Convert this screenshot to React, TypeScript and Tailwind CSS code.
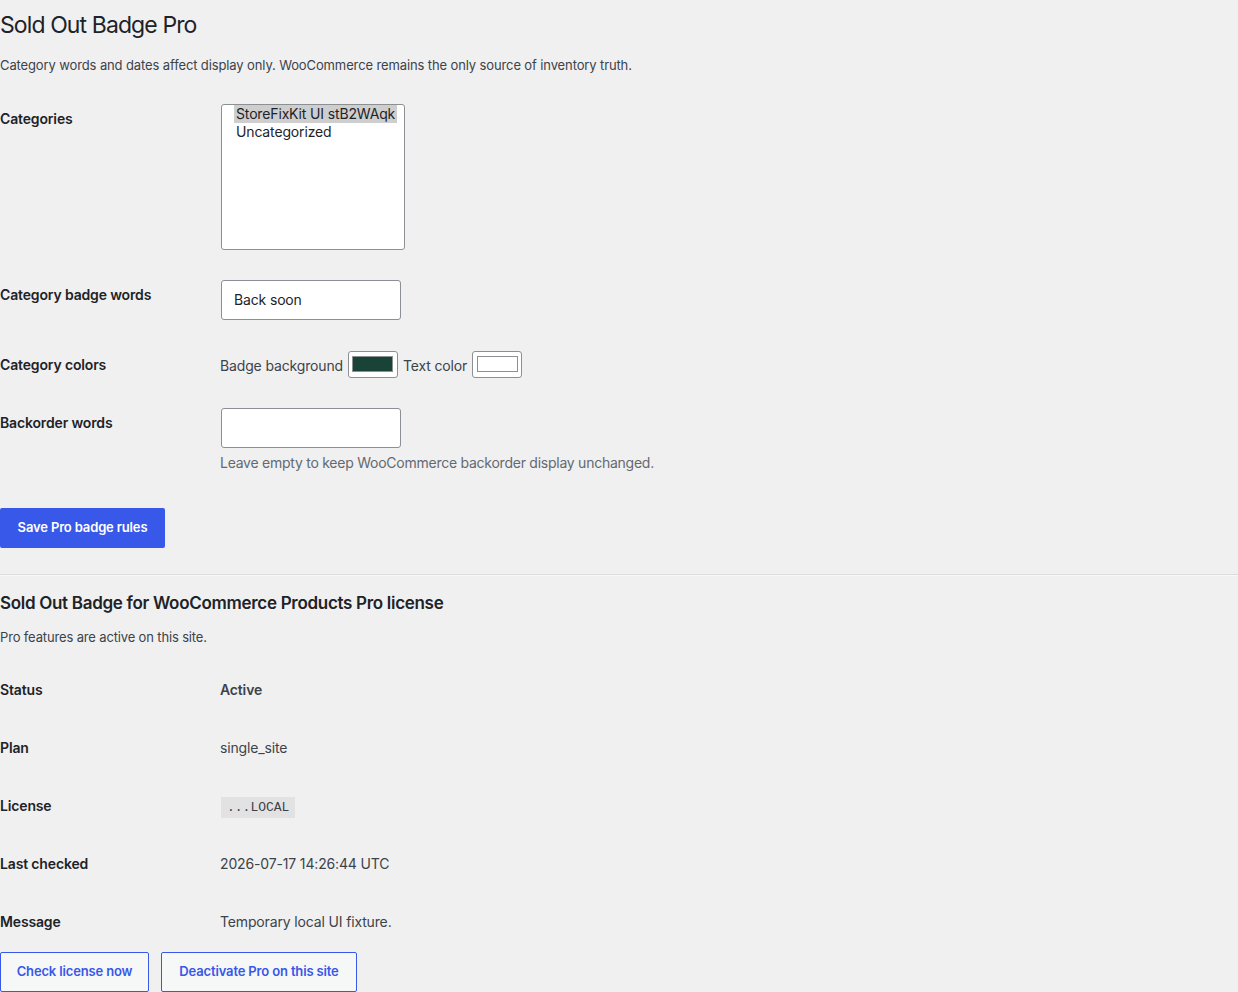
import React from "react";

const font = { fontFamily: "Inter, 'Liberation Sans', sans-serif" };

function Row({ label, children }: { label: string; children: React.ReactNode }) {
  return (
    <div className="flex items-start">
      <div className="w-[220px] shrink-0 pt-[21px] pb-[19px] text-[14px] leading-[18px] font-semibold text-[#1d2327]">{label}</div>
      <div className="pt-[15px] pb-[15px] text-[14px] leading-[18px]">{children}</div>
    </div>
  );
}

function InfoRow({ label, children }: { label: string; children: React.ReactNode }) {
  return (
    <div className="flex items-start h-[58px]">
      <div className="w-[220px] shrink-0 pt-[20px] text-[14px] leading-[18px] font-semibold text-[#1d2327]">{label}</div>
      <div className="pt-[20px] text-[14px] leading-[18px] text-[#3c434a]">{children}</div>
    </div>
  );
}

function Swatch({ color }: { color: string }) {
  return (
    <span className="inline-flex items-center justify-center w-[50px] h-[27px] bg-white border border-[#8c8f94] rounded-[3px]">
      <span className="block w-[41px] h-[16px] border border-[#8c8f94]" style={{ background: color }} />
    </span>
  );
}

export default function App() {
  return (
    <div className="min-h-screen w-full bg-[#f0f0f1] text-[#3c434a] text-[13px] tracking-[-0.15px]" style={font}>
      <h1 className="pt-[10px] pb-[4px] text-[23px] leading-[30px] font-normal text-[#1d2327] tracking-[-0.9px]">Sold Out Badge Pro</h1>
      <p className="mt-[11px] text-[13px] leading-[20px] text-[#3c434a] tracking-[-0.12px]">
        Category words and dates affect display only. WooCommerce remains the only source of inventory truth.
      </p>

      <div className="mt-[14px]">
        <Row label="Categories">
          <div className="ml-[1px] w-[184px] h-[146px] bg-white border border-[#8c8f94] rounded-[3px] pl-[12px] pr-[7px] text-[14px] leading-[18px] text-[#1d2327] whitespace-nowrap">
            <div className="bg-[#cecece] pl-[2px] pr-[2px] w-fit">StoreFixKit UI stB2WAqk</div>
            <div className="pl-[2px]">Uncategorized</div>
          </div>
        </Row>
        <Row label="Category badge words">
          <div className="ml-[1px] w-[180px] h-[40px] bg-white border border-[#8c8f94] rounded-[3px] flex items-center pl-[12px] text-[14px] text-[#1d2327]">
            Back soon
          </div>
        </Row>
        <Row label="Category colors">
          <div className="flex items-center h-[28px] gap-[5px] text-[14px] text-[#3c434a]">
            <span className="pt-[4px]">Badge background</span>
            <Swatch color="#1a4338" />
            <span className="pt-[4px]">Text color</span>
            <Swatch color="#ffffff" />
          </div>
        </Row>
        <Row label="Backorder words">
          <div className="ml-[1px] w-[180px] h-[40px] bg-white border border-[#8c8f94] rounded-[3px]" />
          <p className="mt-[4px] text-[14px] leading-[21px] text-[#646970] tracking-[-0.25px]">Leave empty to keep WooCommerce backorder display unchanged.</p>
        </Row>
      </div>

      <button className="mt-[20px] h-[40px] w-[165px] bg-[#3858e9] rounded-[2px] text-white text-[13px] font-semibold">
        Save Pro badge rules
      </button>

      <div className="mt-[26px] border-t border-[#dcdcde] border-b border-b-[#f6f7f7]" />

      <h2 className="mt-[16px] text-[17px] leading-[22px] font-semibold text-[#1d2327] tracking-[-0.3px]">Sold Out Badge for WooCommerce Products Pro license</h2>
      <p className="mt-[13px] text-[13px] leading-[20px] text-[#3c434a]">Pro features are active on this site.</p>

      <div className="mt-[14px]">
        <InfoRow label="Status"><span className="font-semibold">Active</span></InfoRow>
        <InfoRow label="Plan">single_site</InfoRow>
        <InfoRow label="License">
          <code className="ml-[1px] bg-[#e2e2e3] px-[6px] pt-[3px] pb-[3px] text-[13px] tracking-normal" style={{ fontFamily: "'Liberation Mono', monospace" }}>...LOCAL</code>
        </InfoRow>
        <InfoRow label="Last checked">2026-07-17 14:26:44 UTC</InfoRow>
        <InfoRow label="Message">Temporary local UI fixture.</InfoRow>
      </div>

      <div className="mt-[1px] flex gap-[12px]">
        <button className="h-[40px] w-[149px] border border-[#3858e9] rounded-[2px] bg-[#f6f7f7] text-[#3858e9] text-[13px] font-semibold">
          Check license now
        </button>
        <button className="h-[40px] w-[196px] border border-[#3858e9] rounded-[2px] bg-[#f6f7f7] text-[#3858e9] text-[13px] font-semibold">
          Deactivate Pro on this site
        </button>
      </div>
    </div>
  );
}
